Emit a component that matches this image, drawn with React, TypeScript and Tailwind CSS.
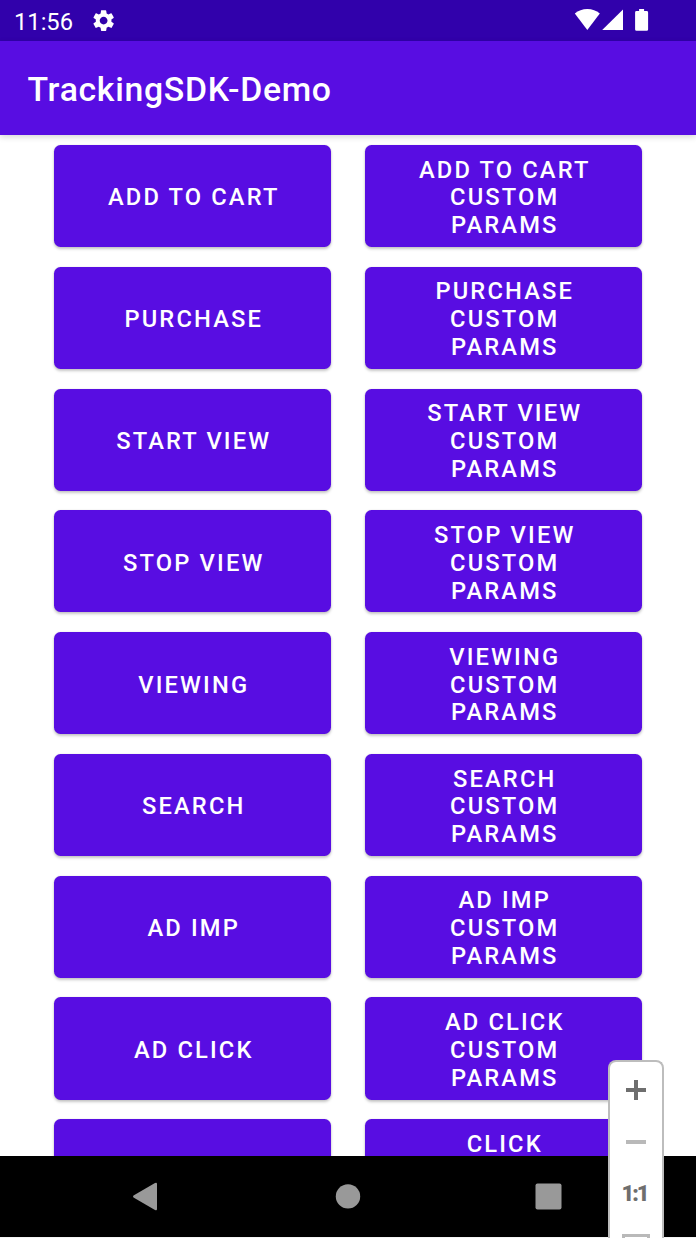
import React from "react";

const events: string[] = [
  "ADD TO CART",
  "PURCHASE",
  "START VIEW",
  "STOP VIEW",
  "VIEWING",
  "SEARCH",
  "AD IMP",
  "AD CLICK",
  "CLICK",
];

function EventButton({ lines }: { lines: string[] }) {
  return (
    <button className="flex h-[102.2px] w-[277px] flex-col items-center justify-center rounded-[6.5px] bg-[#580de2] pt-[4.6px] pl-[2.5px] text-[23.7px] leading-[27.8px] font-medium tracking-[2.15px] text-white shadow-[0_2px_3px_rgba(0,0,0,0.22),0_0_2px_rgba(0,0,0,0.1)]">
      {lines.map((line) => (
        <span key={line} className="block whitespace-nowrap">
          {line}
        </span>
      ))}
    </button>
  );
}

function StatusBar() {
  return (
    <div className="flex h-[41px] shrink-0 items-start bg-[#3101ab] text-white">
      <span className="w-[78px] pt-[8px] pl-[14px] text-[23.7px] leading-[28px]">11:56</span>
      <svg className="mt-[6px] ml-[11px] h-[29px] w-[29px]" viewBox="0 0 24 24" fill="currentColor">
        <path d="M19.14 12.94c.04-.3.06-.61.06-.94 0-.32-.02-.64-.07-.94l2.03-1.58a.49.49 0 0 0 .12-.61l-1.92-3.32a.488.488 0 0 0-.59-.22l-2.39.96c-.5-.38-1.03-.7-1.62-.94l-.36-2.54a.484.484 0 0 0-.48-.41h-3.84c-.24 0-.43.17-.47.41l-.36 2.54c-.59.24-1.13.57-1.62.94l-2.39-.96c-.22-.08-.47 0-.59.22L2.74 8.87c-.12.21-.08.47.12.61l2.03 1.58c-.05.3-.09.63-.09.94s.02.64.07.94l-2.03 1.58a.49.49 0 0 0-.12.61l1.92 3.32c.12.22.37.29.59.22l2.39-.96c.5.38 1.03.7 1.62.94l.36 2.54c.05.24.24.41.48.41h3.84c.24 0 .44-.17.47-.41l.36-2.54c.59-.24 1.13-.56 1.62-.94l2.39.96c.22.08.47 0 .59-.22l1.92-3.32c.12-.22.07-.47-.12-.61l-2.01-1.58zM12 15.6c-1.98 0-3.6-1.62-3.6-3.6s1.62-3.6 3.6-3.6 3.6 1.62 3.6 3.6-1.62 3.6-3.6 3.6z" transform="translate(1.3 1.3) scale(0.9)" />
      </svg>
      <svg className="mt-[8px] mr-[46px] ml-auto h-[24px] w-[76px]" viewBox="0 0 76 24" fill="currentColor">
        <path d="M.8 5.6C4.3 2.6 8.500 1 13.300 1s9 1.600 12.500 4.600L13.300 22z" />
        <path d="M49 1.500v20.500H28.200z" />
        <path d="M62.500 3h2.600V1h5v2h2.600a1.400 1.400 0 0 1 1.400 1.400v17a1.400 1.400 0 0 1-1.400 1.400H62.500a1.400 1.400 0 0 1-1.400-1.400v-17A1.400 1.400 0 0 1 62.500 3z" />
      </svg>
    </div>
  );
}

function NavigationBar() {
  return (
    <nav className="h-[81px] shrink-0 bg-black text-[#999999]">
      <svg className="block h-[81px] w-[696px]" viewBox="0 0 696 81" fill="currentColor">
        <path d="M133.500 39.500 155 27q2-1 2 1v25q0 2-2 1L133.500 41.500q-1-1 0-2z" />
        <circle cx="348" cy="40.400" r="12.200" />
        <rect x="535.500" y="27.500" width="26" height="26" rx="2" />
      </svg>
    </nav>
  );
}

function ZoomControls() {
  return (
    <aside className="absolute top-[1060px] left-[608px] flex h-[178px] w-[56px] flex-col items-center rounded-t-[8px] border-2 border-b-0 border-[#bdbdbd] bg-white">
      <svg className="mt-[18px] h-[20px] w-[20px] shrink-0" viewBox="0 0 20 20" fill="none">
        <path d="M0 10h20M10 0v20" stroke="#6e6e6e" strokeWidth="4" />
      </svg>
      <div className="mt-[40px] h-[4px] w-[20px] shrink-0 bg-[#b9b9b9]" />
      <span className="mt-[38px] -ml-[3px] h-[24px] text-[22px] leading-[24px] font-black tracking-[-2px] whitespace-nowrap text-[#6e6e6e]">
        1:1
      </span>
      <div className="mt-[28px] h-[4px] w-[28px] shrink-0 border-x-3 border-t-3 border-[#b9b9b9]" />
    </aside>
  );
}

export default function App() {
  return (
    <div className="relative flex h-[1238px] w-[696px] flex-col overflow-hidden bg-white font-['Roboto','Liberation_Sans',sans-serif]">
      <StatusBar />
      <header className="z-10 flex h-[94px] shrink-0 items-center bg-[#580de2] pt-[3px] pl-[27.5px] text-[33.8px] leading-[40px] font-medium tracking-[0.68px] text-white shadow-[0_2px_6px_rgba(0,0,0,0.16)]">
        TrackingSDK-Demo
      </header>
      <main className="min-h-0 flex-1 overflow-hidden pt-[10px] pl-[54px]">
        <div className="grid w-[588px] grid-cols-2 gap-x-[34px] gap-y-[19.58px]">
          {events.map((event) => (
            <React.Fragment key={event}>
              <EventButton lines={[event]} />
              <EventButton lines={[event, "CUSTOM", "PARAMS"]} />
            </React.Fragment>
          ))}
        </div>
      </main>
      <NavigationBar />
      <div className="h-px shrink-0 bg-[#f4f4f4]" />
      <ZoomControls />
    </div>
  );
}
